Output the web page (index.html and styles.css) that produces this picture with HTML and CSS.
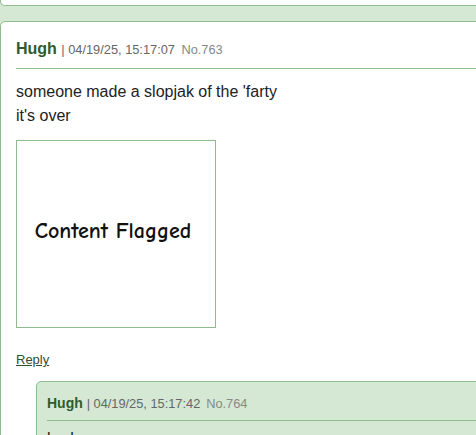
FILE: index.html
```html
<!DOCTYPE html>
<html lang="en">
  <head>
    <meta charset="UTF-8" />
    <meta name="viewport" content="width=device-width, initial-scale=1.0" />
    <title>Thread</title>
    <link rel="stylesheet" href="styles.css">
  </head>
  <body>
    <div class="thread">
      <div class="post post-prev"></div>

      <div class="post">
        <div class="post-header">
          <span class="name">Hugh</span>
          <span class="meta">| 04/19/25, 15:17:07</span>
          <span class="post-no">No.763</span>
        </div>
        <div class="post-body">
          someone made a slopjak of the 'farty<br />
          it's over
        </div>
        <div class="flagged">Content Flagged</div>
        <div class="reply-link"><a href="#">Reply</a></div>

        <div class="post reply">
          <div class="post-header">
            <span class="name">Hugh</span>
            <span class="meta">| 04/19/25, 15:17:42</span>
            <span class="post-no">No.764</span>
          </div>
          <div class="post-body">bruh</div>
        </div>
      </div>
    </div>
  </body>
</html>
```

FILE: styles.css
```css
html,
body {
  overflow: hidden;
}
body {
  margin: 0;
  background: #d4e8d4;
  font-family: "Liberation Sans", Arial, sans-serif;
  color: #222;
}
.thread {
  width: 620px;
}
.post {
  background: #fff;
  border: 1px solid #8fbc8f;
  border-radius: 5px;
  padding: 0 15px 40px;
}
.post-prev {
  height: 5px;
  padding: 0;
  border-top: none;
  border-radius: 0 0 5px 5px;
  margin-bottom: 15px;
}
.post-header {
  padding: 18px 0 10px;
  border-bottom: 1px solid #8fbc8f;
  font-size: 16px;
}
.name {
  font-weight: bold;
  color: #2f5a2f;
}
.meta {
  font-size: 12.8px;
  color: #666;
}
.post-no {
  font-size: 12.8px;
  color: #888;
  margin-left: 2px;
}
.post-body {
  margin-top: 11px;
  font-size: 16px;
  line-height: 24px;
}
.flagged {
  width: 192px;
  height: 180px;
  margin-top: 12px;
  padding: 0 6px 6px 0;
  border: 1px solid #8fbc8f;
  display: flex;
  align-items: center;
  justify-content: center;
  font-family: "Comic Sans MS", "Comic Neue", cursive;
  font-size: 22px;
  font-weight: bold;
  color: #111;
}
.reply-link {
  margin: 24px 0 14px;
  font-size: 13px;
}
.reply-link a {
  color: #2f4f2f;
}
.reply {
  margin-left: 20px;
  background: #d4e8d4;
  padding: 0 10px 40px;
}
.reply .post-header {
  padding: 13px 0 9px;
  font-size: 14px;
}
.reply .post-body {
  margin-top: 6px;
}
```
